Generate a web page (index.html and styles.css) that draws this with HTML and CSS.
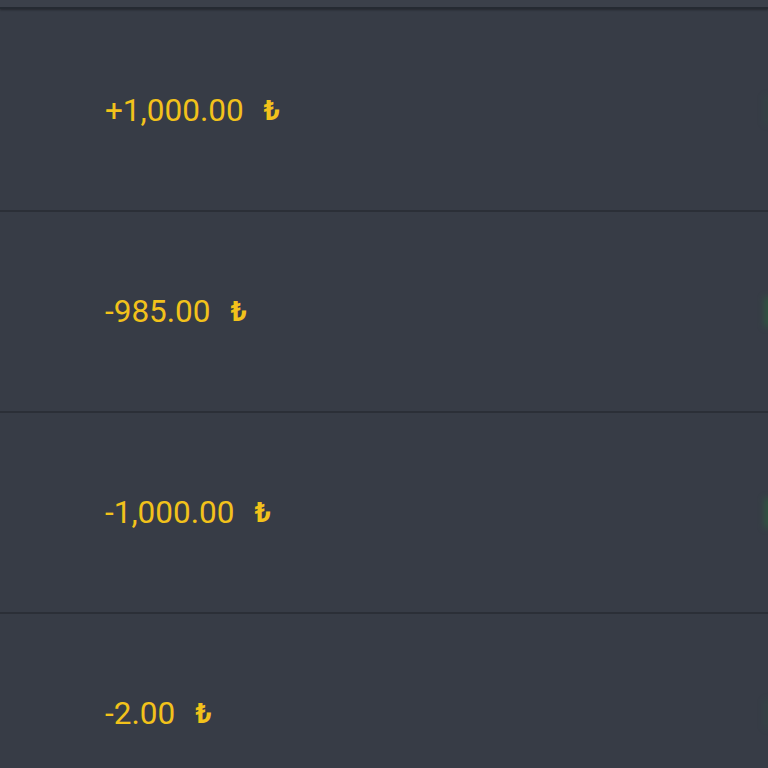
FILE: index.html
```html
<!DOCTYPE html>
<html>
<head>
<meta charset="utf-8">
<link rel="stylesheet" href="styles.css">
</head>
<body>
<div class="topbar"></div>
<div class="list">
  <div class="row"><span class="amount">+1,000.00</span><span class="cur">₺</span><span class="side side-faint"></span></div>
  <div class="row"><span class="amount">-985.00</span><span class="cur">₺</span><span class="side"></span></div>
  <div class="row"><span class="amount">-1,000.00</span><span class="cur">₺</span><span class="side"></span></div>
  <div class="row"><span class="amount">-2.00</span><span class="cur">₺</span><span class="side side-faint"></span></div>
</div>
</body>
</html>
```
FILE: styles.css
```css
html, body {
  margin: 0;
  padding: 0;
  background: #373c46;
  overflow: hidden;
  height: 768px;
}
.topbar {
  height: 7px;
  background: #3b404a;
  border-bottom: 2px solid #252a32;
  box-shadow: 0 1px 2px rgba(0,0,0,0.35);
}
.list {
  display: flex;
  flex-direction: column;
  height: 759px;
  overflow: hidden;
}
.row {
  position: relative;
  flex: none;
  height: 201px;
  box-sizing: border-box;
  border-bottom: 2px solid #2b2f37;
  display: flex;
  align-items: center;
  padding-left: 105px;
  font-family: Roboto, "Liberation Sans", sans-serif;
  font-size: 31.5px;
  color: #f2c21b;
}
.row:first-child { height: 203px; padding-top: 1px; }
.cur {
  margin-left: 20px;
  font-weight: 700;
  font-size: 28px;
}
.side {
  position: absolute;
  right: -10px;
  top: 50%;
  width: 14px;
  height: 30px;
  margin-top: -15px;
  background: rgba(40, 110, 60, 0.45);
  filter: blur(3px);
}
.side-faint { background: rgba(40, 110, 60, 0.15); }
```
